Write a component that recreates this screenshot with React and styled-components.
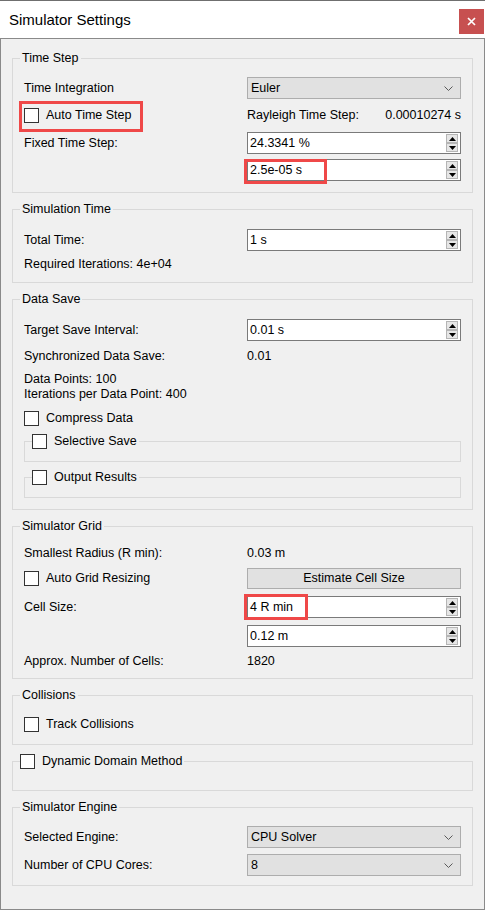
import React from 'react';
import styled, { createGlobalStyle } from 'styled-components';

const GlobalStyle = createGlobalStyle`
  html, body {
    margin: 0;
    padding: 0;
    background: #ffffff;
  }
  body {
    font-family: "Liberation Sans", Arial, sans-serif;
  }
`;

const ChevronDown = () => (
    <svg width="9" height="5" viewBox="0 0 9 5">
        <polyline points="0.5,0.5 4.5,4.5 8.5,0.5" fill="none" stroke="#5a5a5a" strokeWidth="1" />
    </svg>
);

const Tri = ({ down }) => (
    <svg width="7" height="4" viewBox="0 0 7 4">
        <polygon points={down ? '0,0 7,0 3.5,4' : '3.5,0 7,4 0,4'} fill="#000" />
    </svg>
);

const CheckBox = ({ children, mark }) => (
    <CheckLabel>
        <Box />
        {children && <span>{children}</span>}
        {mark && <Mark $left={mark[0]} $top={mark[1]} $w={mark[2]} $h={mark[3]} />}
    </CheckLabel>
);

const SpinBox = ({ value, mark }) => (
    <Spin>
        <SpinValue>{value}</SpinValue>
        <Arrows>
            <ArrowBtn><Tri /></ArrowBtn>
            <ArrowBtn><Tri down /></ArrowBtn>
        </Arrows>
        {mark && <Mark $left={mark[0]} $top={mark[1]} $w={mark[2]} $h={mark[3]} />}
    </Spin>
);

const ComboBox = ({ value }) => (
    <Combo>
        <span>{value}</span>
        <ChevronDown />
    </Combo>
);

const App = () => {
    return (
        <>
            <GlobalStyle />
            <Window>
                <TitleBar>
                    <Title>Simulator Settings</Title>
                    <CloseButton>
                        <svg width="9" height="9" viewBox="0 0 9 9">
                            <path d="M1 1 L8 8 M8 1 L1 8" stroke="#fff" strokeWidth="1.7" />
                        </svg>
                    </CloseButton>
                </TitleBar>
                <Body>
                    <Group $pt={12} $pb={11} $gap={5}>
                        <Legend>Time Step</Legend>
                        <Row>
                            <span>Time Integration</span>
                            <ComboBox value="Euler" />
                        </Row>
                        <Row $h={23}>
                            <CheckBox mark={[-5, -7, 124, 31]}>Auto Time Step</CheckBox>
                            <Split>
                                <span>Rayleigh Time Step:</span>
                                <span>0.00010274 s</span>
                            </Split>
                        </Row>
                        <Row>
                            <span>Fixed Time Step:</span>
                            <SpinBox value="24.3341 %" />
                        </Row>
                        <Row>
                            <span />
                            <SpinBox value="2.5e-05 s" mark={[-4, -1, 83, 25]} />
                        </Row>
                    </Group>

                    <Group $pt={13} $pb={10} $gap={6}>
                        <Legend>Simulation Time</Legend>
                        <Row>
                            <span>Total Time:</span>
                            <SpinBox value="1 s" />
                        </Row>
                        <TextLine>Required Iterations: 4e+04</TextLine>
                    </Group>

                    <Group $pt={13} $pb={11} $gap={8}>
                        <Legend>Data Save</Legend>
                        <Row>
                            <span>Target Save Interval:</span>
                            <SpinBox value="0.01 s" />
                        </Row>
                        <Row $h={15}>
                            <span>Synchronized Data Save:</span>
                            <span>0.01</span>
                        </Row>
                        <TextBlock>
                            <div>Data Points: 100</div>
                            <div>Iterations per Data Point: 400</div>
                        </TextBlock>
                        <CheckRow>
                            <CheckBox>Compress Data</CheckBox>
                        </CheckRow>
                        <SubGroup $pb={12}>
                            <CheckLegend $ml={7}>
                                <CheckBox>Selective Save</CheckBox>
                            </CheckLegend>
                        </SubGroup>
                        <SubGroup $pb={12}>
                            <CheckLegend $ml={7}>
                                <CheckBox>Output Results</CheckBox>
                            </CheckLegend>
                        </SubGroup>
                    </Group>

                    <Group $pt={13} $pb={9} $gap={7}>
                        <Legend>Simulator Grid</Legend>
                        <Row $h={15}>
                            <span>Smallest Radius (R min):</span>
                            <span>0.03 m</span>
                        </Row>
                        <Row $h={21}>
                            <CheckBox>Auto Grid Resizing</CheckBox>
                            <PushButton>Estimate Cell Size</PushButton>
                        </Row>
                        <Row>
                            <span>Cell Size:</span>
                            <SpinBox value="4 R min" mark={[-4, -3, 64, 26]} />
                        </Row>
                        <Row>
                            <span />
                            <SpinBox value="0.12 m" />
                        </Row>
                        <Row $h={15}>
                            <span>Approx. Number of Cells:</span>
                            <span>1820</span>
                        </Row>
                    </Group>

                    <Group $pt={14} $pb={12} $gap={6}>
                        <Legend>Collisions</Legend>
                        <CheckRow>
                            <CheckBox>Track Collisions</CheckBox>
                        </CheckRow>
                    </Group>

                    <Group $pt={0} $pb={21} $gap={0}>
                        <CheckLegend $ml={-4}>
                            <CheckBox>Dynamic Domain Method</CheckBox>
                        </CheckLegend>
                    </Group>

                    <Group $pt={12} $pb={9} $gap={6}>
                        <Legend>Simulator Engine</Legend>
                        <Row>
                            <span>Selected Engine:</span>
                            <ComboBox value="CPU Solver" />
                        </Row>
                        <Row>
                            <span>Number of CPU Cores:</span>
                            <ComboBox value="8" />
                        </Row>
                    </Group>
                </Body>
            </Window>
        </>
    );
};

export default App;

const Window = styled.div`
    width: 485px;
    height: 910px;
    display: flex;
    flex-direction: column;
    font-size: 12.5px;
    color: #000;
`

const TitleBar = styled.div`
    height: 38px;
    box-sizing: border-box;
    border-top: 1px solid #6f6f6f;
    background: #ffffff;
    display: flex;
    align-items: center;
    justify-content: space-between;
    padding: 0 1px 0 9px;
`

const Title = styled.div`
    font-size: 15px;
    color: #000;
`

const CloseButton = styled.div`
    width: 25px;
    height: 25px;
    align-self: flex-start;
    margin-top: 8px;
    background: #c75050;
    display: flex;
    align-items: center;
    justify-content: center;
`

const Body = styled.div`
    flex: 1;
    box-sizing: border-box;
    border: 1px solid #8a8a8a;
    background: #f0f0f0;
    padding: 12px 11px 0 11px;
    display: flex;
    flex-direction: column;
    gap: 9px;
`

const Group = styled.fieldset`
    margin: 0;
    min-width: 0;
    border: 1px solid #d9d9d9;
    padding: ${p => p.$pt}px 11px ${p => p.$pb}px 11px;
    display: flex;
    flex-direction: column;
    gap: ${p => p.$gap}px;
`

const SubGroup = styled.fieldset`
    margin: 0;
    min-width: 0;
    border: 1px solid #d9d9d9;
    padding: 0 0 ${p => p.$pb}px 0;
`

const Legend = styled.legend`
    margin-left: -4px;
    padding: 0 2px;
    height: 14px;
    line-height: 14px;
`

const CheckLegend = styled.legend`
    margin-left: ${p => p.$ml}px;
    padding: 0 2px 0 0;
    height: 15px;
    display: flex;
    align-items: center;
`

const Row = styled.div`
    display: grid;
    grid-template-columns: 223px 1fr;
    align-items: center;
    height: ${p => p.$h || 22}px;
    line-height: 15px;
`

const Split = styled.div`
    display: flex;
    justify-content: space-between;
`

const TextLine = styled.div`
    height: 15px;
    line-height: 15px;
`

const TextBlock = styled.div`
    line-height: 15px;
`

const CheckRow = styled.div`
    height: 16px;
    display: flex;
    align-items: center;
`

const CheckLabel = styled.label`
    position: relative;
    display: inline-flex;
    align-items: center;
    gap: 7px;
    height: 15px;
    width: fit-content;
    line-height: 15px;
`

const Box = styled.span`
    width: 15px;
    height: 15px;
    box-sizing: border-box;
    border: 1px solid #333333;
    background: #ffffff;
    flex: none;
`

const Mark = styled.span`
    position: absolute;
    left: ${p => p.$left}px;
    top: ${p => p.$top}px;
    width: ${p => p.$w}px;
    height: ${p => p.$h}px;
    box-sizing: border-box;
    border: 3px solid #ef4848;
    pointer-events: none;
`

const Spin = styled.div`
    position: relative;
    height: 22px;
    box-sizing: border-box;
    border: 1px solid #7a7a7a;
    background: #ffffff;
    display: flex;
    align-items: center;
    padding: 0 2px 0 2px;
`

const SpinValue = styled.span`
    flex: 1;
`

const Arrows = styled.div`
    display: flex;
    flex-direction: column;
    width: 12px;
`

const ArrowBtn = styled.div`
    height: 9px;
    box-sizing: border-box;
    border: 1px solid #b5b5b5;
    background: #e6e6e6;
    display: flex;
    align-items: center;
    justify-content: center;
`

const Combo = styled.div`
    height: 22px;
    box-sizing: border-box;
    border: 1px solid #adadad;
    background: #e1e1e1;
    display: flex;
    align-items: center;
    justify-content: space-between;
    padding: 0 7px 0 3px;
`

const PushButton = styled.div`
    height: 21px;
    box-sizing: border-box;
    border: 1px solid #adadad;
    background: #e1e1e1;
    display: flex;
    align-items: center;
    justify-content: center;
`
